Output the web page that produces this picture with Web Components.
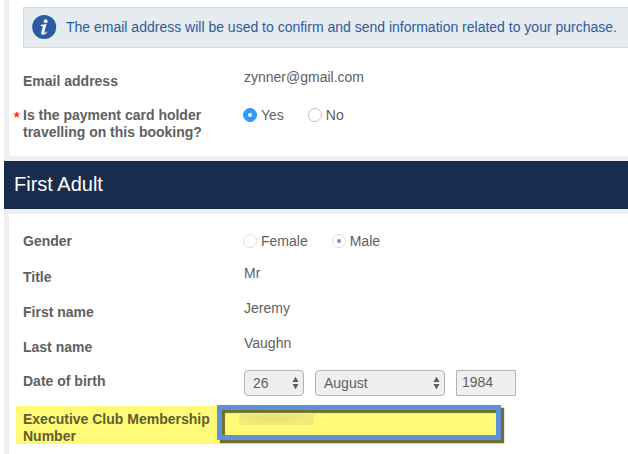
<!DOCTYPE html>
<html lang="en">
<head>
<meta charset="utf-8">
<title>Passenger details</title>
<style>
  body {
    margin: 0;
    width: 628px;
    height: 454px;
    overflow: hidden;
    background: #fff;
    color: #606060;
    font: 14px/17px "Liberation Sans", Arial, sans-serif;
  }
</style>
</head>
<body>
<booking-page>
  <form-panel style="--height: 156px">
    <info-notice>The email address will be used to confirm and send information related to your purchase.</info-notice>
    <form-row label="Email address" style="--top: 25px; --height: 33px; --shift: -4px">zynner@gmail.com</form-row>
    <form-row label="Is the payment card holder travelling on this booking?" required style="--top: 1px; --height: 40px">
      <radio-option checked style="--gap: 25px">Yes</radio-option>
      <radio-option>No</radio-option>
    </form-row>
  </form-panel>
  <section-header>First Adult</section-header>
  <form-panel style="--height: 240px">
    <form-row label="Gender" style="--top: 19px; --height: 36px">
      <radio-option disabled style="--gap: 25px">Female</radio-option>
      <radio-option disabled checked>Male</radio-option>
    </form-row>
    <form-row label="Title" style="--height: 35px; --shift: -4px">Mr</form-row>
    <form-row label="First name" style="--height: 35px; --shift: -4px">Jeremy</form-row>
    <form-row label="Last name" style="--height: 34px; --shift: -4px">Vaughn</form-row>
    <form-row label="Date of birth" style="--height: 33px; --shift: -3px">
      <select-box style="--width: 60px; --gap: 11px">26</select-box>
      <select-box style="--width: 130px; --gap: 11px">August</select-box>
      <year-field>1984</year-field>
    </form-row>
    <club-row label="Executive Club Membership Number"></club-row>
  </form-panel>
</booking-page>

<script>
class BookingPage extends HTMLElement {
  constructor() {
    super();
    this.attachShadow({ mode: "open" }).innerHTML = `
      <style>
        :host {
          display: flex;
          flex-direction: column;
          gap: 5px;
          height: 454px;
          box-sizing: border-box;
          margin-left: 4px;
          background: #efefef;
        }
        ::slotted(section-header) { flex: none; }
      </style>
      <slot></slot>
    `;
  }
}

class FormPanel extends HTMLElement {
  constructor() {
    super();
    this.attachShadow({ mode: "open" }).innerHTML = `
      <style>
        :host {
          display: flow-root;
          flex: none;
          box-sizing: border-box;
          height: var(--height);
          margin-left: 5px;
          padding-left: 7px;
          background: #fff;
        }
      </style>
      <slot></slot>
    `;
  }
}

class InfoNotice extends HTMLElement {
  constructor() {
    super();
    this.attachShadow({ mode: "open" }).innerHTML = `
      <style>
        :host {
          display: flex;
          align-items: center;
          gap: 9px;
          box-sizing: border-box;
          height: 41px;
          margin: 7px -2px 0 7px;
          padding-left: 8px;
          border: 1px solid #cddceb;
          background: #e6ebef;
          color: #2d5a9e;
          white-space: nowrap;
        }
        svg { flex: none; }
      </style>
      <svg width="25" height="25" viewBox="0 0 25 25">
        <circle cx="12.2" cy="12" r="12" fill="#2b5ba1"/>
        <circle cx="13.7" cy="6.2" r="1.9" fill="#fff"/>
        <path d="M8.9 9.8q3-.2 5.6-.8l-2.1 7.8q-.3 1.1.4 1.1.6 0 1.8-1.4l.7.5q-1.9 2.8-4.3 2.8-2.2 0-1.7-2.4l1.3-5q.3-1.3-.7-1.4l-1.2-.1z" fill="#fff"/>
      </svg>
      <span><slot></slot></span>
    `;
  }
}

class SectionHeader extends HTMLElement {
  constructor() {
    super();
    this.attachShadow({ mode: "open" }).innerHTML = `
      <style>
        :host {
          display: block;
          box-sizing: border-box;
          height: 48px;
          padding: 12px 0 0 10px;
          background: #182c4d;
          color: #fff;
          font-size: 20px;
          line-height: 23px;
        }
      </style>
      <slot></slot>
    `;
  }
}

class FormRow extends HTMLElement {
  connectedCallback() {
    this.attachShadow({ mode: "open" }).innerHTML = `
      <style>
        :host {
          display: grid;
          grid-template-columns: 7px 221px 1fr;
          align-items: start;
          height: var(--height);
          padding-top: var(--top, 0);
        }
        .mark { color: #f22; font-weight: bold; margin: 2px 0 0 -2px; }
        .label { font-weight: bold; width: 195px; }
        .value { display: flex; align-items: center; margin-top: var(--shift, 0); }
      </style>
      <span class="mark">${this.hasAttribute("required") ? "*" : ""}</span>
      <span class="label">${this.getAttribute("label")}</span>
      <div class="value"><slot></slot></div>
    `;
  }
}

class RadioOption extends HTMLElement {
  constructor() {
    super();
    this.attachShadow({ mode: "open" }).innerHTML = `
      <style>
        :host {
          display: inline-flex;
          align-items: flex-start;
          gap: 4px;
          margin-left: -1px;
          margin-right: var(--gap, 0);
        }
        i {
          display: grid;
          place-items: center;
          box-sizing: border-box;
          width: 14px;
          height: 14px;
          margin-top: 1px;
          border: 1px solid #c2c2c2;
          border-radius: 50%;
          background: #fff;
        }
        :host([disabled]) i { border-color: #dedede; }
        :host([checked]) i::after {
          content: "";
          width: 4px;
          height: 4px;
          border-radius: 50%;
          background: #fff;
        }
        :host([checked]:not([disabled])) i { border-color: #2f92fb; background: #3497fd; }
        :host([checked][disabled]) i::after { background: #8c8c8c; }
      </style>
      <i></i><span><slot></slot></span>
    `;
  }
}

class SelectBox extends HTMLElement {
  constructor() {
    super();
    this.attachShadow({ mode: "open" }).innerHTML = `
      <style>
        :host {
          display: flex;
          align-items: center;
          justify-content: space-between;
          box-sizing: border-box;
          width: var(--width);
          height: 26px;
          margin-right: var(--gap, 0);
          padding: 0 4px 0 8px;
          border: 1px solid #b3b3b3;
          border-radius: 4px;
          background: #efefef;
        }
      </style>
      <span><slot></slot></span>
      <svg width="7" height="14" viewBox="0 0 7 14" fill="#5c5c5c">
        <path d="M3.5 .7 6.5 6h-6zM.5 8h6l-3 5.3z"/>
      </svg>
    `;
  }
}

class YearField extends HTMLElement {
  constructor() {
    super();
    this.attachShadow({ mode: "open" }).innerHTML = `
      <style>
        :host {
          display: block;
          box-sizing: border-box;
          width: 60px;
          height: 26px;
          padding: 3px 0 0 5px;
          border: 1px solid #b3b3b3;
          border-radius: 1px;
          background: #efefef;
        }
      </style>
      <slot></slot>
    `;
  }
}

// highlighted membership row with the framed, blurred-out number
class ClubRow extends HTMLElement {
  connectedCallback() {
    this.attachShadow({ mode: "open" }).innerHTML = `
      <style>
        :host {
          display: grid;
          grid-template-columns: 201px 285px;
          align-items: start;
          width: 488px;
          height: 38px;
          box-sizing: border-box;
          background: #fffb78;
        }
        .label {
          padding: 5px 0 0 7px;
          color: #605e30;
          font-weight: bold;
        }
        .frame {
          box-sizing: border-box;
          width: 284px;
          height: 35px;
          margin-top: -1px;
          border: 5px solid #5e91d5;
          box-shadow: 3px 3px 1px #716e35, inset 3px 3px 1px #716e35;
        }
        .redacted {
          width: 75px;
          height: 12px;
          margin: 3px 0 0 17px;
          background: radial-gradient(ellipse at 45% 45%, #e6e071, #f3ed78 75%);
        }
      </style>
      <span class="label">${this.getAttribute("label")}</span>
      <div class="frame"><div class="redacted"></div></div>
    `;
  }
}

customElements.define("booking-page", BookingPage);
customElements.define("form-panel", FormPanel);
customElements.define("info-notice", InfoNotice);
customElements.define("section-header", SectionHeader);
customElements.define("form-row", FormRow);
customElements.define("radio-option", RadioOption);
customElements.define("select-box", SelectBox);
customElements.define("year-field", YearField);
customElements.define("club-row", ClubRow);
</script>
</body>
</html>
